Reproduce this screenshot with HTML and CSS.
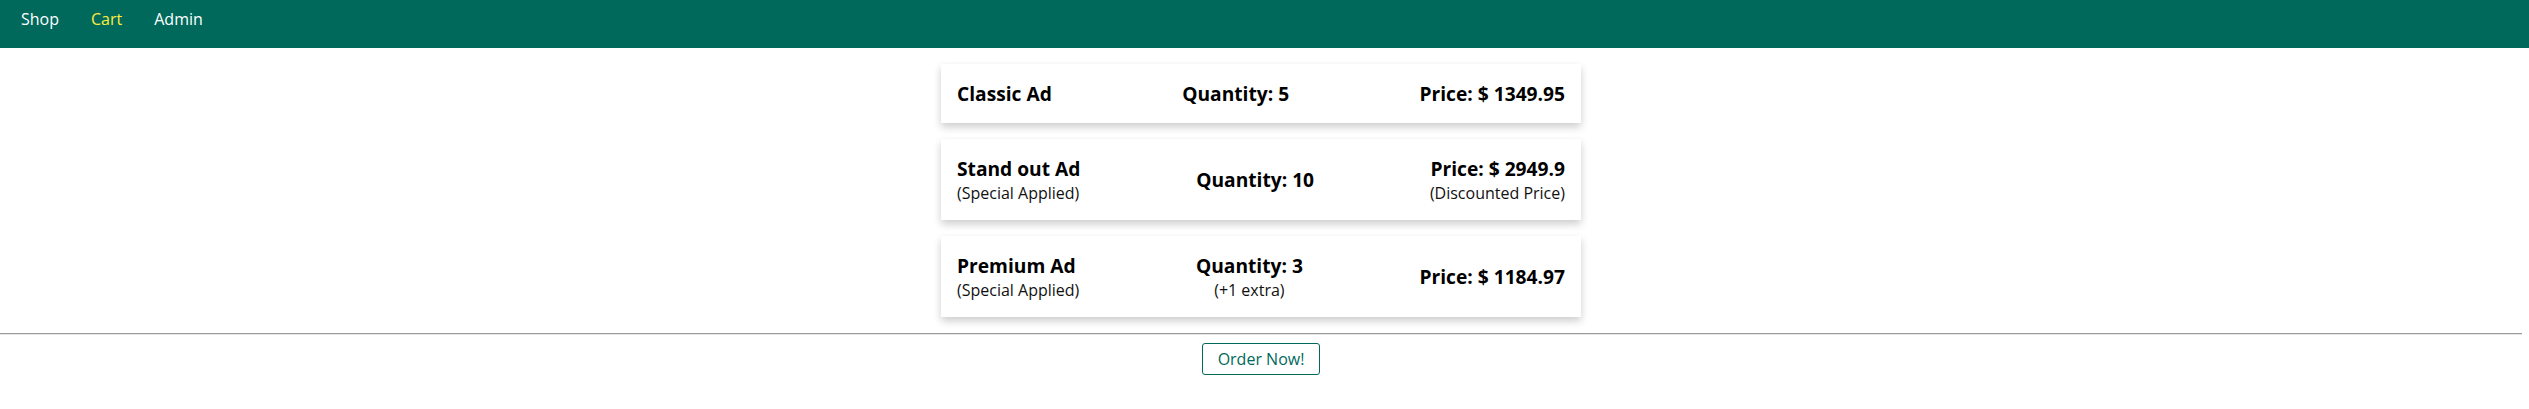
FILE: index.html
```html
<!DOCTYPE html>
<html lang="en">
<head>
<meta charset="utf-8">
<title>Cart</title>
<link rel="stylesheet" href="styles.css">
</head>
<body>
<nav class="navbar">
  <a class="nav-link" href="#">Shop</a>
  <a class="nav-link active" href="#">Cart</a>
  <a class="nav-link" href="#">Admin</a>
</nav>
<main class="page">
  <section class="cart-list">
    <div class="cart-item">
      <div class="col col-left"><div class="main-text">Classic Ad</div></div>
      <div class="col col-mid"><div class="main-text">Quantity: 5</div></div>
      <div class="col col-right"><div class="main-text">Price: $ 1349.95</div></div>
    </div>
    <div class="cart-item">
      <div class="col col-left"><div class="main-text">Stand out Ad</div><div class="sub-text">(Special Applied)</div></div>
      <div class="col col-mid"><div class="main-text">Quantity: 10</div></div>
      <div class="col col-right"><div class="main-text">Price: $ 2949.9</div><div class="sub-text">(Discounted Price)</div></div>
    </div>
    <div class="cart-item">
      <div class="col col-left"><div class="main-text">Premium Ad</div><div class="sub-text">(Special Applied)</div></div>
      <div class="col col-mid"><div class="main-text">Quantity: 3</div><div class="sub-text">(+1 extra)</div></div>
      <div class="col col-right"><div class="main-text">Price: $ 1184.97</div></div>
    </div>
  </section>
  <hr class="divider">
  <div class="actions">
    <button class="order-btn" type="button">Order Now!</button>
  </div>
</main>
</body>
</html>
```
FILE: styles.css
```css
* { box-sizing: border-box; }
html, body {
  margin: 0;
  padding: 0;
  background: #ffffff;
  font-family: "Open Sans", "Noto Sans", "Liberation Sans", sans-serif;
  color: #000;
}
.navbar {
  display: flex;
  align-items: flex-start;
  height: 48px;
  padding: 0 5px;
  background: #00695c;
}
.nav-link {
  display: block;
  padding: 8px 16px;
  font-size: 16px;
  color: #ffffff;
  text-decoration: none;
}
.nav-link.active { color: #ffeb3b; }
.page {
  margin-right: 7px;
}
.cart-list {
  display: flex;
  flex-direction: column;
  align-items: center;
  gap: 16px;
  padding-top: 16px;
  padding-bottom: 16px;
}
.cart-item {
  width: 640px;
  display: flex;
  justify-content: space-between;
  align-items: center;
  padding: 16px;
  background: #fff;
  box-shadow: 0 4px 8px 0 rgba(0, 0, 0, 0.2);
}
.col-left { text-align: left; }
.col-mid { text-align: center; }
.col-right { text-align: right; }
.main-text {
  font-size: 19.2px;
  font-weight: 700;
}
.sub-text {
  font-size: 16px;
  font-weight: 400;
  color: #111;
}
.divider {
  margin: 0 0 8px 0;
  border: 0;
  border-top: 1px solid #9a9a9a;
  border-bottom: 1px solid #e6e6e6;
  height: 0;
}
.actions {
  display: flex;
  justify-content: center;
}
.order-btn {
  font-family: "Open Sans", "Noto Sans", "Liberation Sans", sans-serif;
  font-size: 16px;
  line-height: normal;
  padding: 4px 15px;
  color: #00695c;
  background: #fff;
  border: 1px solid #00695c;
  border-radius: 3px;
  cursor: pointer;
}
```
